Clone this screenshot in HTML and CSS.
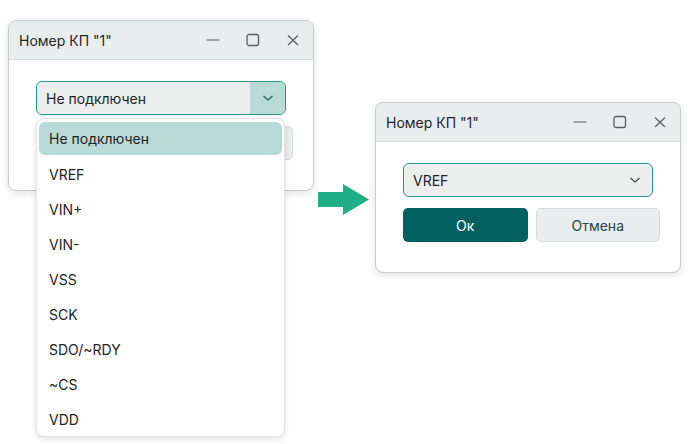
FILE: index.html
```html
<!DOCTYPE html>
<html lang="ru">
<head>
<meta charset="utf-8">
<title>Номер КП</title>
<link rel="stylesheet" href="styles.css">
</head>
<body>
<div class="desktop">
  <div class="window win-left">
    <div class="titlebar">
      <span class="title">Номер КП "1"</span>
      <div class="controls">
        <span class="ctl"><svg width="14" height="14" viewBox="0 0 14 14"><path d="M0.5 7h13" stroke="#5a5e5e" stroke-width="1.2"/></svg></span>
        <span class="ctl"><svg width="14" height="14" viewBox="0 0 14 14"><rect x="1" y="1.5" width="11.5" height="11" rx="2" fill="none" stroke="#5a5e5e" stroke-width="1.3"/></svg></span>
        <span class="ctl"><svg width="14" height="14" viewBox="0 0 14 14"><path d="M2 2.5l10 9.5M12 2.5l-10 9.5" stroke="#5a5e5e" stroke-width="1.2"/></svg></span>
      </div>
    </div>
    <div class="content">
      <div class="combo open">
        <span class="combo-text">Не подключен</span>
        <span class="combo-btn"><svg width="12" height="8" viewBox="0 0 12 8"><path d="M1.5 2l4.5 4 4.5-4" fill="none" stroke="#245e5c" stroke-width="1.3"/></svg></span>
      </div>
      <div class="buttons">
        <span class="btn btn-ok"></span>
        <span class="btn btn-cancel"></span>
      </div>
    </div>
  </div>

  <ul class="popup">
    <li class="item selected">Не подключен</li>
    <li class="item">VREF</li>
    <li class="item">VIN+</li>
    <li class="item">VIN-</li>
    <li class="item">VSS</li>
    <li class="item">SCK</li>
    <li class="item">SDO/~RDY</li>
    <li class="item">~CS</li>
    <li class="item">VDD</li>
  </ul>

  <svg class="arrow" width="54" height="32" viewBox="0 0 54 32"><polygon points="0,8 25,8 25,0 51,15.5 25,31 25,23 0,23" fill="#1eae88"/></svg>

  <div class="window win-right">
    <div class="titlebar">
      <span class="title">Номер КП "1"</span>
      <div class="controls">
        <span class="ctl"><svg width="14" height="14" viewBox="0 0 14 14"><path d="M0.5 7h13" stroke="#5a5e5e" stroke-width="1.2"/></svg></span>
        <span class="ctl"><svg width="14" height="14" viewBox="0 0 14 14"><rect x="1" y="1.5" width="11.5" height="11" rx="2" fill="none" stroke="#5a5e5e" stroke-width="1.3"/></svg></span>
        <span class="ctl"><svg width="14" height="14" viewBox="0 0 14 14"><path d="M2 2.5l10 9.5M12 2.5l-10 9.5" stroke="#5a5e5e" stroke-width="1.2"/></svg></span>
      </div>
    </div>
    <div class="content">
      <div class="combo">
        <span class="combo-text">VREF</span>
        <span class="combo-btn plain"><svg width="12" height="8" viewBox="0 0 12 8"><path d="M1.5 2l4.5 4 4.5-4" fill="none" stroke="#3c4444" stroke-width="1.2"/></svg></span>
      </div>
      <div class="buttons">
        <span class="btn btn-ok">Ок</span>
        <span class="btn btn-cancel">Отмена</span>
      </div>
    </div>
  </div>
</div>
</body>
</html>
```

FILE: styles.css
```css
html, body {
  margin: 0;
  padding: 0;
  background: #ffffff;
}

body {
  font-family: Inter, "Noto Sans", sans-serif;
  font-size: 14px;
  color: #1e2222;
}

.desktop {
  position: relative;
  width: 688px;
  height: 444px;
  overflow: hidden;
}

.window {
  position: absolute;
  width: 306px;
  height: 171px;
  box-sizing: border-box;
  border: 1px solid #c6cbcb;
  border-radius: 8px;
  background: #ffffff;
  overflow: hidden;
  box-shadow: 0 2px 8px rgba(0, 0, 0, 0.12);
  display: flex;
  flex-direction: column;
}

.win-left {
  left: 8px;
  top: 20px;
}

.win-right {
  left: 375px;
  top: 102px;
}

.titlebar {
  height: 38px;
  flex: none;
  background: #eaeded;
  border-bottom: 1px solid #d3dbdb;
  display: flex;
  align-items: center;
  padding-left: 10px;
}

.title {
  font-size: 14px;
  color: #1f2626;
  padding-top: 1px;
}

.controls {
  margin-left: auto;
  display: flex;
}

.ctl {
  width: 40px;
  height: 38px;
  display: flex;
  align-items: center;
  justify-content: center;
}

.ctl svg {
  display: block;
}

.content {
  padding: 21px 20px 0 27px;
}

.combo {
  width: 250px;
  height: 34px;
  box-sizing: border-box;
  border: 1px solid #2a9790;
  border-radius: 6px;
  background: #eceeee;
  display: flex;
  align-items: center;
  overflow: hidden;
}

.combo-text {
  flex: 1;
  padding-left: 9px;
  color: #1e2424;
}

.combo-btn {
  width: 35px;
  height: 100%;
  display: flex;
  align-items: center;
  justify-content: center;
  background: #b8dbd8;
}

.combo-btn.plain {
  background: transparent;
}

.buttons {
  display: flex;
  gap: 8px;
  margin-top: 11px;
}

.btn {
  width: 125px;
  height: 34px;
  box-sizing: border-box;
  border-radius: 5px;
  display: flex;
  align-items: center;
  justify-content: center;
  font-size: 14px;
}

.btn-ok {
  background: #036060;
  color: #ffffff;
}

.btn-cancel {
  background: #e9eded;
  border: 1px solid #d3dada;
  color: #234448;
}

.popup {
  position: absolute;
  left: 36px;
  top: 118px;
  width: 249px;
  height: 319px;
  box-sizing: border-box;
  margin: 0;
  padding: 3px 2px;
  list-style: none;
  background: #ffffff;
  border: 1px solid #e2e4e4;
  border-radius: 8px;
  box-shadow: 0 2px 6px rgba(0, 0, 0, 0.12);
}

.item {
  height: 35px;
  display: flex;
  align-items: center;
  padding-left: 10px;
  border-radius: 6px;
  color: #1e2222;
}

.item.selected {
  height: 33px;
  margin-bottom: 2px;
  background: #b8dbd8;
}

.arrow {
  position: absolute;
  left: 318px;
  top: 184px;
}
```
